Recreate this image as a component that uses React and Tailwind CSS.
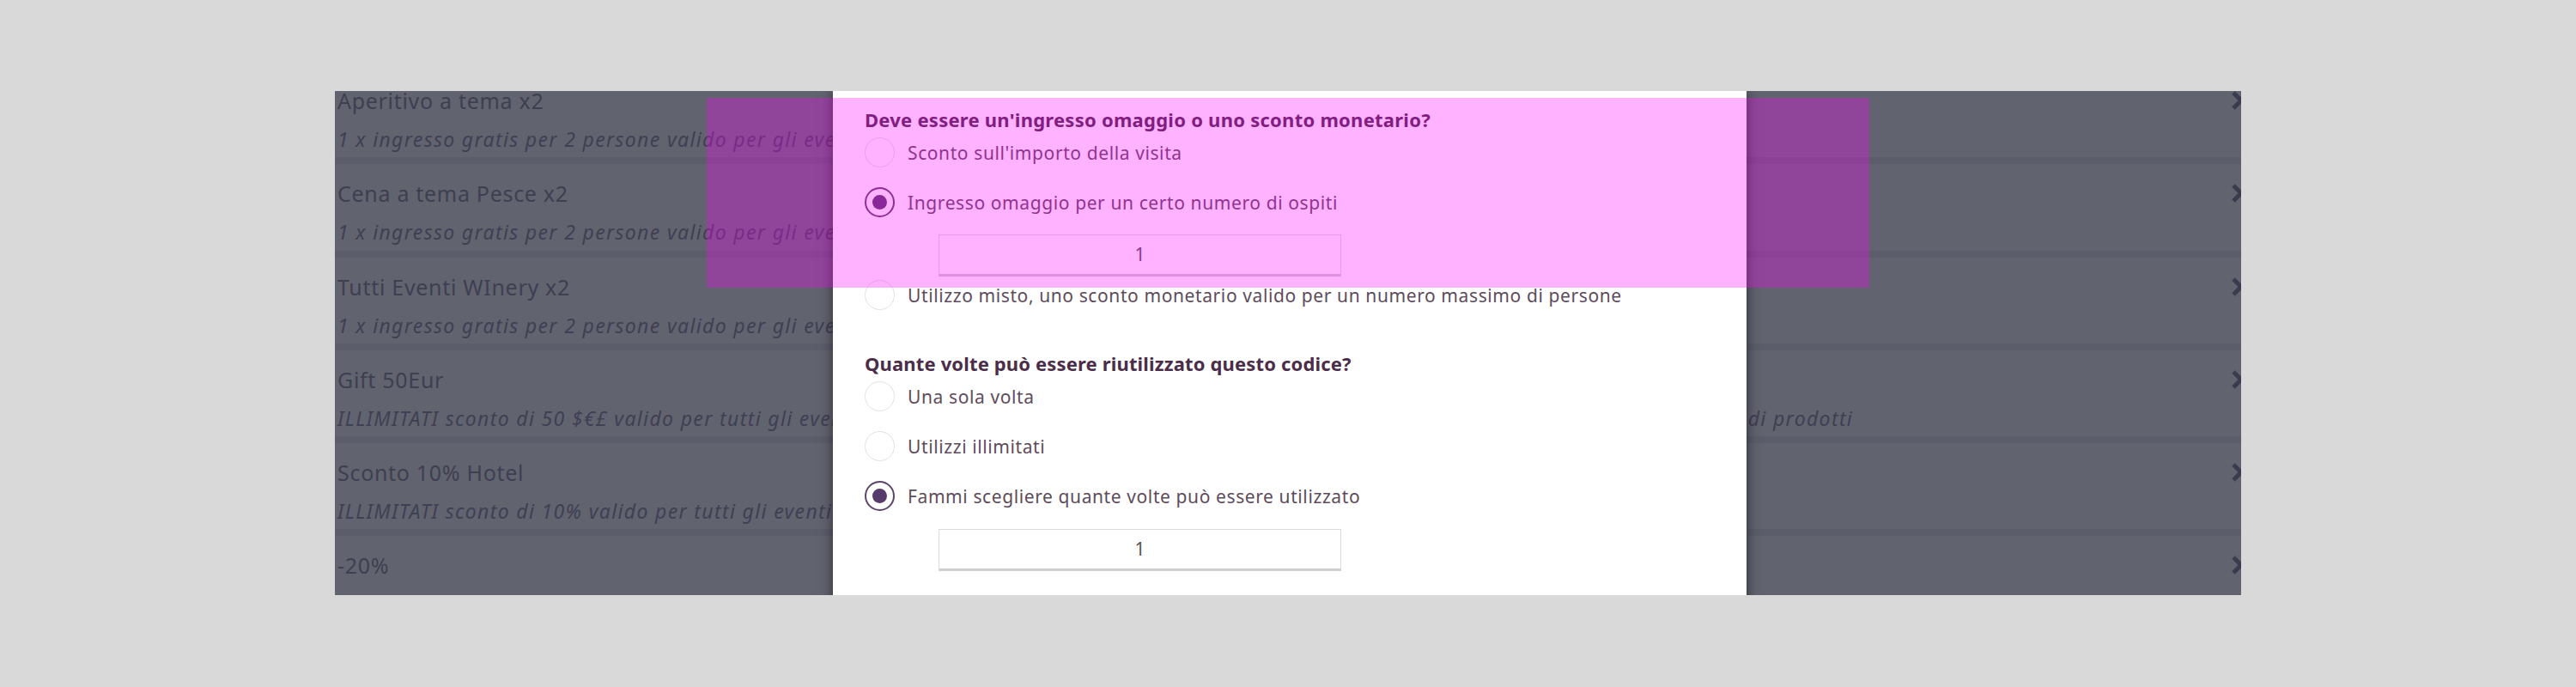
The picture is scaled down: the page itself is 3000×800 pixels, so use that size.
import React from "react";

const items = [
  {
    title: "Aperitivo a tema x2",
    desc: "1 x ingresso gratis per 2 persone valido per gli eventi Aperitivo a tema",
  },
  {
    title: "Cena a tema Pesce x2",
    desc: "1 x ingresso gratis per 2 persone valido per gli eventi Cena a tema Pesce",
  },
  {
    title: "Tutti Eventi WInery x2",
    desc: "1 x ingresso gratis per 2 persone valido per gli eventi Winery",
  },
  {
    title: "Gift 50Eur",
    desc: "ILLIMITATI sconto di 50 $€£ valido per tutti gli eventi, le visite guidate in vigna, le degustazioni in cantina, le cene a tema Vino e per l'acquisto di prodotti",
  },
  {
    title: "Sconto 10% Hotel",
    desc: "ILLIMITATI sconto di 10% valido per tutti gli eventi Hotel",
  },
  {
    title: "-20%",
    desc: "ILLIMITATI sconto di 20% valido per tutti gli eventi",
  },
];

function Radio({ checked }) {
  if (checked) {
    return (
      <span className="flex h-[35px] w-[35px] shrink-0 items-center justify-center rounded-full border-2 border-[#5d4469] bg-white">
        <span className="h-[17px] w-[17px] rounded-full bg-[#573a6c]" />
      </span>
    );
  }
  return <span className="h-[35px] w-[35px] shrink-0 rounded-full border-[1.5px] border-[#dde3e6] bg-white" />;
}

function Option({ checked, label, className = "" }) {
  return (
    <div className={`flex h-[35px] items-center gap-[15px] ${className}`}>
      <Radio checked={checked} />
      <span className="text-[21px] leading-[28px] tracking-[0.6px] text-[#5e4c5c]">{label}</span>
    </div>
  );
}

function NumberBox({ className = "" }) {
  return (
    <div
      className={`ml-[86px] h-[49px] w-[469px] border border-[#dcdcdc] border-b-[3px] border-b-[#cfcfcf] bg-white text-center text-[21px] leading-[45px] text-[#555555] ${className}`}
    >
      1
    </div>
  );
}

function Chevron() {
  return (
    <svg width="16" height="22" viewBox="0 0 16 22" className="mr-[-4px] shrink-0">
      <polyline points="3,2 12,11 3,20" fill="none" stroke="#3b3b4f" strokeWidth="5" />
    </svg>
  );
}

export default function App() {
  return (
    <div className="relative h-[800px] w-[3000px] bg-[#d9d9d9] pl-[390px] pt-[106px] font-['Noto_Sans',Lato,sans-serif]">
      <div className="relative h-[587px] w-[2220px] overflow-hidden bg-[#5b5d6a]">
        {/* list under the backdrop */}
        <div className="mt-[-23px] flex flex-col gap-[8px]">
          {items.map((item) => (
            <div key={item.title} className="h-[100.3px] shrink-0 bg-[#61636f] pl-[3px] pt-[16px] text-[#3e3f51]">
              <div className="flex items-center justify-between">
                <span className="text-[25px] leading-[36px] tracking-[0.7px]">{item.title}</span>
                <Chevron />
              </div>
              <div className="mt-[7px] whitespace-nowrap text-[23px] italic leading-[40px] tracking-[1.35px] text-[#3f4053]">
                {item.desc}
              </div>
            </div>
          ))}
        </div>

        {/* modal */}
        <div className="absolute left-[580px] top-0 h-[700px] w-[1064px] bg-white pl-[37px] pt-[19px] shadow-[0_0_14px_rgba(0,0,0,0.55)]">
          <div className="text-[22px] font-bold leading-[28px] tracking-[0.25px] text-[#4b2d49]">
            Deve essere un'ingresso omaggio o uno sconto monetario?
          </div>
          <Option className="mt-[7px]" label="Sconto sull'importo della visita" />
          <Option className="mt-[23px]" checked label="Ingresso omaggio per un certo numero di ospiti" />
          <NumberBox className="mt-[20px]" />
          <Option className="mt-[4px]" label="Utilizzo misto, uno sconto monetario valido per un numero massimo di persone" />

          <div className="mt-[48px] text-[22px] font-bold leading-[28px] tracking-[0.15px] text-[#4b2d49]">
            Quante volte può essere riutilizzato questo codice?
          </div>
          <Option className="mt-[7px]" label="Una sola volta" />
          <Option className="mt-[23px]" label="Utilizzi illimitati" />
          <Option className="mt-[23px]" checked label="Fammi scegliere quante volte può essere utilizzato" />
          <NumberBox className="mt-[21px]" />
        </div>
      </div>

      {/* highlight overlay */}
      <div className="pointer-events-none absolute left-[823px] top-[114px] h-[221px] w-[1354px] bg-[rgba(255,0,255,0.3)]" />
    </div>
  );
}
